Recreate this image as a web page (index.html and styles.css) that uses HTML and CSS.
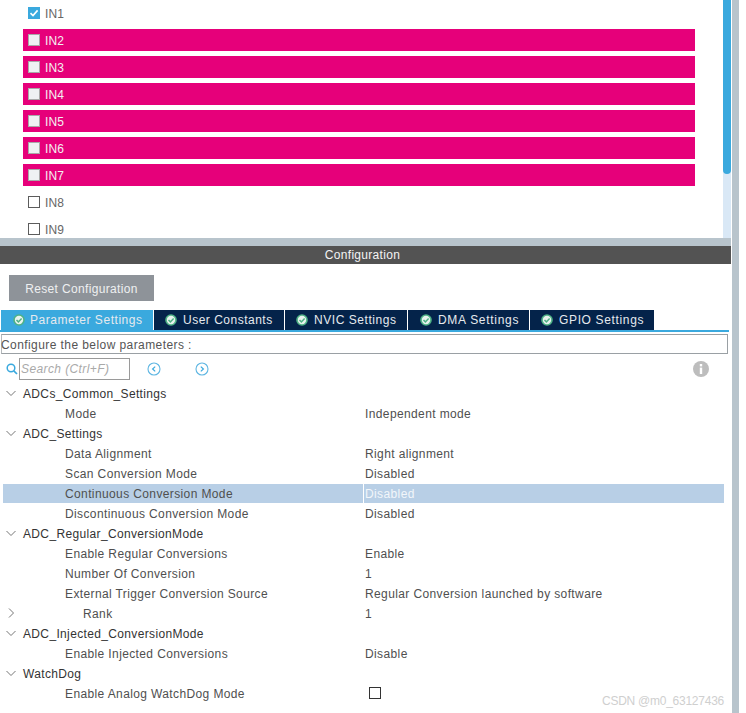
FILE: index.html
```html
<!DOCTYPE html>
<html lang="en">
<head>
<meta charset="utf-8">
<title>ADC Configuration</title>
<link rel="stylesheet" href="styles.css">
</head>
<body>
<div class="app">
  <div class="main">
    <section class="top">
      <div class="channels">
        <label class="ch"><span class="cb checked"><svg viewBox="0 0 12 12" width="12" height="12"><path d="M2.5 6.2 5 8.6 9.600 3.400" fill="none" stroke="#fff" stroke-width="1.6"/></svg></span><span class="lbl">IN1</span></label>
        <label class="ch pink"><span class="cb muted"></span><span class="lbl">IN2</span></label>
        <label class="ch pink"><span class="cb muted"></span><span class="lbl">IN3</span></label>
        <label class="ch pink"><span class="cb muted"></span><span class="lbl">IN4</span></label>
        <label class="ch pink"><span class="cb muted"></span><span class="lbl">IN5</span></label>
        <label class="ch pink"><span class="cb muted"></span><span class="lbl">IN6</span></label>
        <label class="ch pink"><span class="cb muted"></span><span class="lbl">IN7</span></label>
        <label class="ch"><span class="cb"></span><span class="lbl">IN8</span></label>
        <label class="ch"><span class="cb"></span><span class="lbl">IN9</span></label>
      </div>
      <div class="scrollbar"><div class="thumb"></div></div>
    </section>
    <div class="splitter"></div>
    <div class="cfg-title">Configuration</div>
    <section class="cfg">
      <button class="reset">Reset Configuration</button>
      <div class="tabs">
        <div class="tab active t1"><svg class="ok" viewBox="0 0 12 12" width="12" height="12"><circle cx="6" cy="6" r="5.8" fill="#4fb286"/><circle cx="6" cy="6" r="4.200" fill="#e8f3ee"/><path d="M3.500 6 5.400 7.900 8.600 4.400" fill="none" stroke="#4fb286" stroke-width="1.500"/></svg>Parameter Settings</div>
        <div class="tab t2"><svg class="ok" viewBox="0 0 12 12" width="12" height="12"><circle cx="6" cy="6" r="5.8" fill="#4fb286"/><circle cx="6" cy="6" r="4.200" fill="#e8f3ee"/><path d="M3.500 6 5.400 7.900 8.600 4.400" fill="none" stroke="#4fb286" stroke-width="1.500"/></svg>User Constants</div>
        <div class="tab t3"><svg class="ok" viewBox="0 0 12 12" width="12" height="12"><circle cx="6" cy="6" r="5.8" fill="#4fb286"/><circle cx="6" cy="6" r="4.200" fill="#e8f3ee"/><path d="M3.500 6 5.400 7.900 8.600 4.400" fill="none" stroke="#4fb286" stroke-width="1.500"/></svg>NVIC Settings</div>
        <div class="tab t4"><svg class="ok" viewBox="0 0 12 12" width="12" height="12"><circle cx="6" cy="6" r="5.8" fill="#4fb286"/><circle cx="6" cy="6" r="4.200" fill="#e8f3ee"/><path d="M3.500 6 5.400 7.900 8.600 4.400" fill="none" stroke="#4fb286" stroke-width="1.500"/></svg>DMA Settings</div>
        <div class="tab t5"><svg class="ok" viewBox="0 0 12 12" width="12" height="12"><circle cx="6" cy="6" r="5.8" fill="#4fb286"/><circle cx="6" cy="6" r="4.200" fill="#e8f3ee"/><path d="M3.500 6 5.400 7.900 8.600 4.400" fill="none" stroke="#4fb286" stroke-width="1.500"/></svg>GPIO Settings</div>
      </div>
      <div class="hint">Configure the below parameters :</div>
      <div class="searchbar">
        <svg class="mag" viewBox="0 0 12 12" width="12" height="12"><circle cx="5" cy="5" r="3.800" fill="none" stroke="#3aa9de" stroke-width="1.500"/><path d="M7.800 7.800 11 11" stroke="#3aa9de" stroke-width="1.700"/></svg>
        <div class="search">Search (Ctrl+F)</div>
        <svg class="nav n1" viewBox="0 0 14 14" width="14" height="14"><circle cx="7" cy="7" r="6" fill="none" stroke="#5fb6e2" stroke-width="1.100"/><path d="M8.200 4.600 5.600 7 8.200 9.400" fill="none" stroke="#3aa9de" stroke-width="1.200"/></svg>
        <svg class="nav n2" viewBox="0 0 14 14" width="14" height="14"><circle cx="7" cy="7" r="6" fill="none" stroke="#5fb6e2" stroke-width="1.100"/><path d="M5.800 4.600 8.400 7 5.800 9.400" fill="none" stroke="#3aa9de" stroke-width="1.200"/></svg>
        <svg class="info" viewBox="0 0 16 16" width="16" height="16"><circle cx="8" cy="8" r="8" fill="#bdbdbd"/><rect x="6.800" y="3" width="2.400" height="2.400" fill="#fff"/><rect x="6.800" y="6.600" width="2.400" height="6.400" fill="#fff"/></svg>
      </div>
      <div class="tree">
        <div class="row group"><svg class="chev" viewBox="0 0 10 10" width="10" height="10"><path d="M.5 3 5 7.500 9.500 3" fill="none" stroke="#777" stroke-width="1"/></svg><span class="title">ADCs_Common_Settings</span></div>
        <div class="row"><span class="name">Mode</span><span class="val">Independent mode</span></div>
        <div class="row group"><svg class="chev" viewBox="0 0 10 10" width="10" height="10"><path d="M.5 3 5 7.500 9.500 3" fill="none" stroke="#777" stroke-width="1"/></svg><span class="title">ADC_Settings</span></div>
        <div class="row"><span class="name">Data Alignment</span><span class="val">Right alignment</span></div>
        <div class="row"><span class="name">Scan Conversion Mode</span><span class="val">Disabled</span></div>
        <div class="row selected"><span class="name">Continuous Conversion Mode</span><span class="val">Disabled</span></div>
        <div class="row"><span class="name">Discontinuous Conversion Mode</span><span class="val">Disabled</span></div>
        <div class="row group"><svg class="chev" viewBox="0 0 10 10" width="10" height="10"><path d="M.5 3 5 7.500 9.500 3" fill="none" stroke="#777" stroke-width="1"/></svg><span class="title">ADC_Regular_ConversionMode</span></div>
        <div class="row"><span class="name">Enable Regular Conversions</span><span class="val">Enable</span></div>
        <div class="row"><span class="name">Number Of Conversion</span><span class="val">1</span></div>
        <div class="row"><span class="name">External Trigger Conversion Source</span><span class="val">Regular Conversion launched by software</span></div>
        <div class="row"><svg class="chev side" viewBox="0 0 10 10" width="10" height="10"><path d="M3 .5 7.500 5 3 9.500" fill="none" stroke="#777" stroke-width="1"/></svg><span class="name deep">Rank</span><span class="val">1</span></div>
        <div class="row group"><svg class="chev" viewBox="0 0 10 10" width="10" height="10"><path d="M.5 3 5 7.500 9.500 3" fill="none" stroke="#777" stroke-width="1"/></svg><span class="title">ADC_Injected_ConversionMode</span></div>
        <div class="row"><span class="name">Enable Injected Conversions</span><span class="val">Disable</span></div>
        <div class="row group"><svg class="chev" viewBox="0 0 10 10" width="10" height="10"><path d="M.5 3 5 7.500 9.500 3" fill="none" stroke="#777" stroke-width="1"/></svg><span class="title">WatchDog</span></div>
        <div class="row"><span class="name">Enable Analog WatchDog Mode</span><span class="val box"><span class="cb small"></span></span></div>
      </div>
      <div class="watermark">CSDN @m0_63127436</div>
    </section>
  </div>
  <div class="edge"></div>
</div>
</body>
</html>
```
FILE: styles.css
```css
* { box-sizing: border-box; }
html, body { margin: 0; padding: 0; background: #fff; }
body { font-family: "Liberation Sans", Arial, sans-serif; font-size: 12px; color: #4a4a4a; overflow: hidden; }
.app { display: flex; width: 739px; height: 713px; overflow: hidden; }
.main { width: 731px; flex: none; display: flex; flex-direction: column; }
.edge { width: 7px; margin-left: 1px; background: #b8c4cc; flex: none; }

.top { display: flex; height: 238px; flex: none; overflow: hidden; }
.channels { width: 723px; flex: none; display: flex; flex-direction: column; padding: 2px 0 0 23px; gap: 5px; }
.ch { display: flex; align-items: center; width: 672px; height: 22px; flex: none; padding-left: 5px; letter-spacing: 0.1px; color: #666; }
.ch.pink { background: #e6007a; color: #f4f0f2; }
.lbl { padding-top: 2px; }
.cb { display: block; width: 12px; height: 12px; border: 1px solid #5c5c5c; margin-right: 5px; background: #fff; flex: none; }
.cb.checked { background: #3aa9de; border: 0; }
.cb.checked svg { display: block; }
.cb.muted { background: #eff1f3; border-color: #a9a9a9; }
.cb.small { margin: 0; border-color: #333; }
.scrollbar { width: 8px; flex: none; background: #d9e8f6; }
.thumb { height: 174px; background: #3aa9de; border-radius: 0 0 4px 4px; }

.splitter { height: 8px; flex: none; background: #b8c4cc; }
.cfg-title { height: 18px; flex: none; background: #535353; color: #f4f4f4; text-align: center; line-height: 19px; padding-right: 6px; letter-spacing: 0.3px; }

.cfg { position: relative; flex: 1; }
.reset { display: block; width: 145px; height: 26px; margin: 11px 0 0 9px; border: 0; padding: 2px 0 0; background: #8e9399; color: #eef0f1; font: inherit; letter-spacing: 0.35px; }
.tabs { display: flex; height: 22px; margin-top: 9px; padding-left: 1px; gap: 1px; width: 729px; border-bottom: 2px solid #3aa9de; }
.tab { display: flex; align-items: center; height: 20px; background: #04234a; color: #e6eaee; letter-spacing: 0.55px; padding-left: 12px; }
.tab.active { background: #3aa9de; }
.ok { margin-right: 6px; flex: none; }
.t1 { width: 152px; }
.t1 .ok { margin-right: 5px; }
.t2 { width: 130px; padding-left: 11px; letter-spacing: 0.5px; }
.t3 { width: 122px; padding-left: 11px; }
.t4 { width: 121px; padding-left: 12px; letter-spacing: 0.7px; }
.t5 { width: 124px; padding-left: 11px; letter-spacing: 0.65px; }
.hint { height: 20px; width: 727px; margin: 2px 0 0 1px; border: 1px solid #9aa0a4; border-left-color: #b5b9bc; line-height: 20px; text-indent: -1px; letter-spacing: 0.42px; color: #555; }
.searchbar { display: flex; align-items: center; height: 22px; margin-top: 4px; padding-left: 6px; }
.mag { flex: none; }
.search { width: 111px; height: 22px; margin-left: 1px; border: 1px solid #9a9a9a; line-height: 20px; padding-left: 1px; font-style: italic; color: #a9a9a9; letter-spacing: 0.4px; }
.nav { flex: none; }
.n1 { margin-left: 17px; }
.n2 { margin-left: 34px; }
.info { margin-left: 484px; flex: none; }

.tree { margin-top: 3px; padding-left: 3px; width: 724px; }
.row { display: flex; align-items: center; height: 20px; letter-spacing: 0.38px; color: #4f4f4f; line-height: 20px; }
.title, .row .name, .row .val { padding-top: 2px; }
.row .name { width: 298px; margin-left: 62px; flex: none; }
.row .name.deep { margin-left: 5px; padding-left: 5px; width: 285px; }
.row .val { padding-left: 1px; border-left: 1px solid transparent; }
.row.group { color: #333; letter-spacing: 0.35px; }
.chev { margin: 0 7px 0 3px; flex: none; }
.chev.side { margin-right: 57px; }
.row.selected { height: 19px; margin: 1px 0 0; background: #b8cfe6; line-height: 17px; }
.row.selected .val { color: #f2f6fa; border-left-color: #fff; align-self: stretch; }
.row .val.box { padding: 0 0 0 5px; }
.watermark { position: absolute; right: 7px; bottom: 5px; color: #cfcfcf; font-size: 12px; letter-spacing: -0.25px; }
```
